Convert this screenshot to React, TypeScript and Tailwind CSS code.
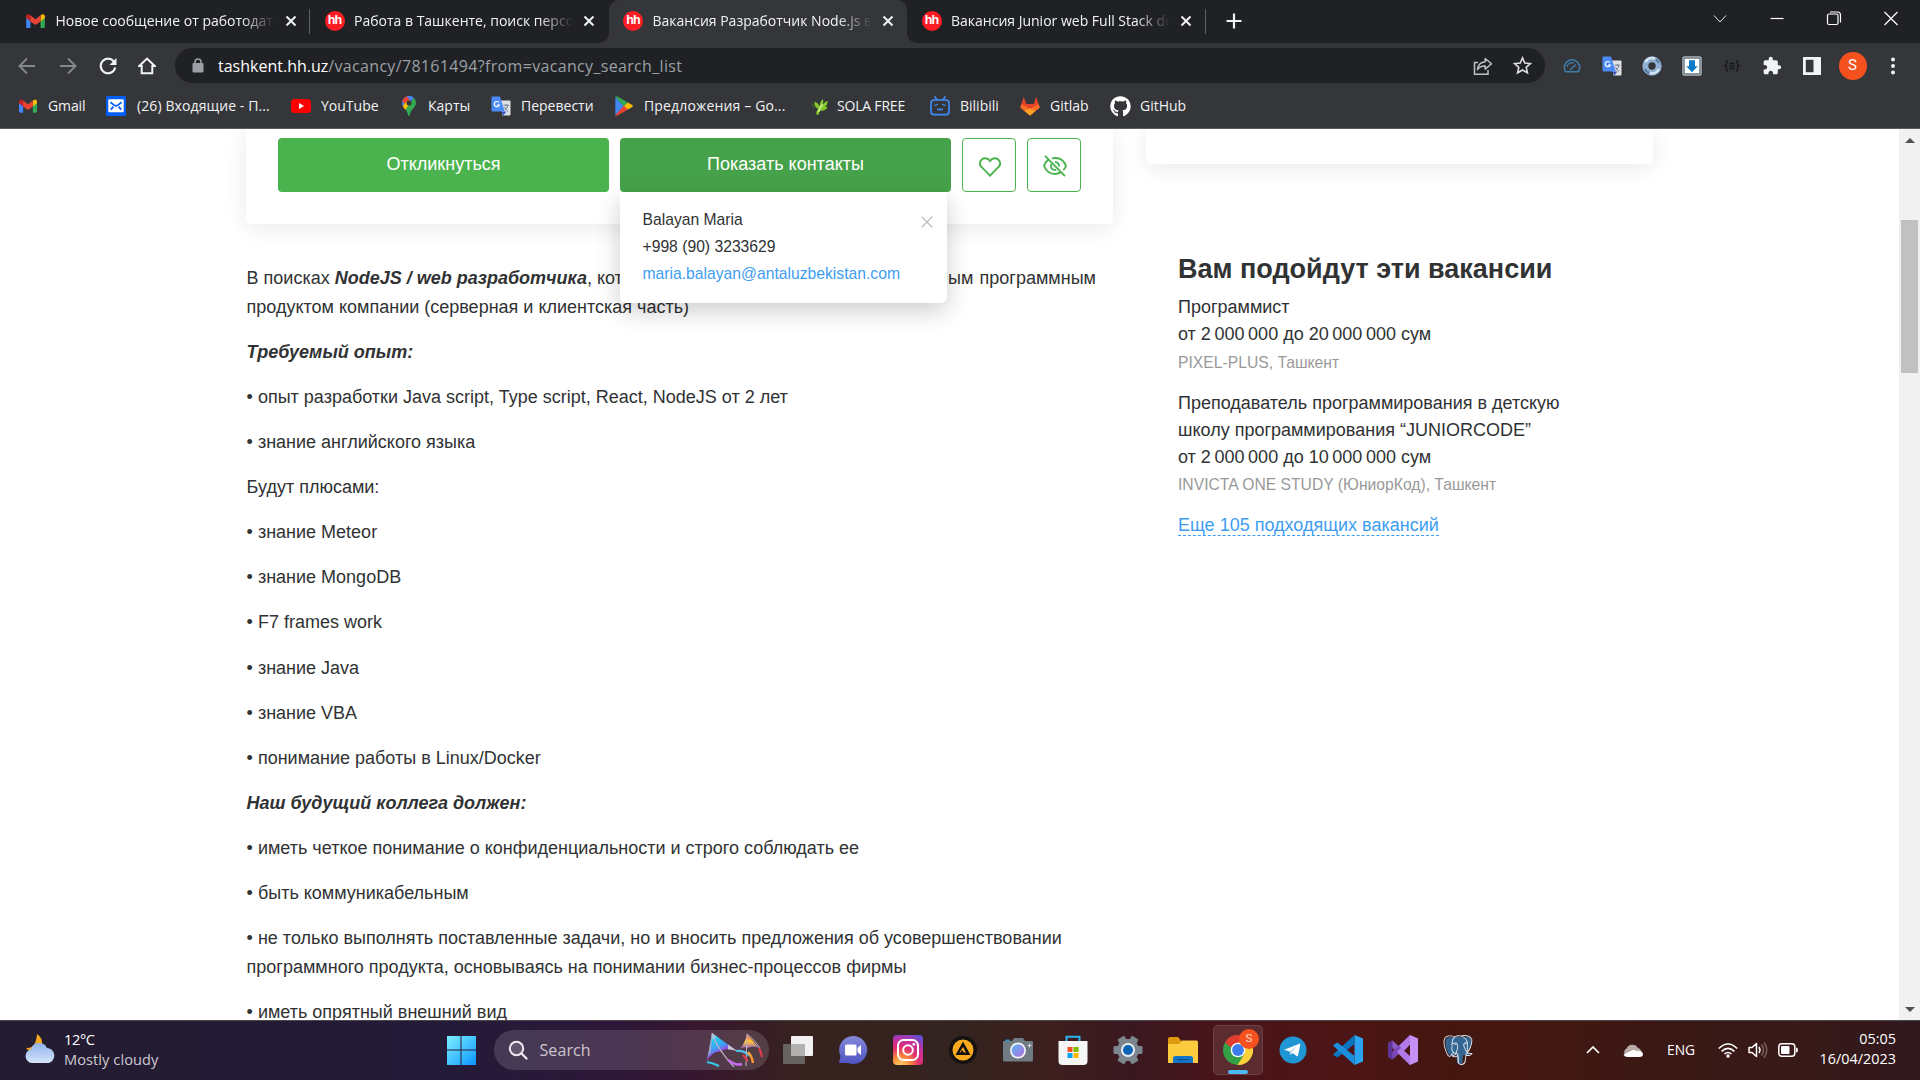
import type { ReactNode } from "react";
import { FaGithub } from "react-icons/fa";
import { SiPostgresql } from "react-icons/si";
import { MdExtension } from "react-icons/md";

/* ---------- small icons ---------- */

const Gmail = ({ className = "" }: { className?: string }) => (
  <svg viewBox="0 0 24 18" className={className}>
    <path d="M0 3v13.400Q0 18 1.600 18H5.500V7z" fill="#4285f4" />
    <path d="M24 3v13.400Q24 18 22.400 18H18.500V7z" fill="#34a853" />
    <path d="M18.500 2v7.500L24 5.300V3c0-2.600-2.700-3.600-4.500-2.100z" fill="#fbbc04" />
    <path d="M5.500 2v7.500L0 5.300V3C0 .4 2.700-.6 4.500.9z" fill="#c5221f" />
    <path d="M5.500 9.500V1.700L12 6.600l6.500-4.900v7.800L12 14.300z" fill="#ea4335" />
  </svg>
);

const Hh = () => (
  <span className="flex h-5 w-5 shrink-0 items-center justify-center rounded-full bg-[#ff1c24] pb-px font-['Liberation_Sans'] text-[12.500px] leading-none font-bold tracking-[-0.800px] text-white">
    hh
  </span>
);

const Translate = () => (
  <svg viewBox="0 0 20 20" className="h-5 w-5">
    <path d="M9 4.500h9.500q1 0 1 1v13q0 1-1 1h-7z" fill="#dfe1e5" />
    <path d="M10.500 15.500l1.800 4 3.200-4z" fill="#3a4fc0" />
    <path d="M1.500.5H9l4.800 15H1.500q-1 0-1-1v-13q0-1 1-1z" fill="#4c8bf5" />
    <path d="M8 6.600A2.600 2.600 0 1 0 8.300 9H6" fill="none" stroke="#fff" strokeWidth="1.200" />
    <path d="M12.700 9.200h5.200M15.200 8v1.200m1.700 0c-.5 2.400-2 4-3 4.900m-.4-3c.7 1.600 2 3 3.700 4.300" fill="none" stroke="#5f6f86" strokeWidth=".9" />
  </svg>
);

const MailRu = () => (
  <svg viewBox="0 0 20 20" className="h-5 w-5">
    <rect width="20" height="20" rx="1.500" fill="#005ff9" />
    <rect x="2.300" y="3.300" width="15.400" height="13" rx="1" fill="#fff" />
    <path d="M4.500 6.200l3.200 2.700q2.300 1.700 4.600 0l3.200-2.700M4.800 13.700l2.600-3M15.200 13.700l-2.600-3" fill="none" stroke="#005ff9" strokeWidth="1.800" />
  </svg>
);

const Youtube = () => (
  <svg viewBox="0 0 20 14" className="h-[14px] w-5">
    <rect width="20" height="14" rx="3.500" fill="#f00" />
    <path d="M8 4l5.200 3L8 10z" fill="#fff" />
  </svg>
);

const MapPin = () => (
  <svg viewBox="0 0 14 20" className="h-5 w-[14px]">
    <path d="M7 0a7 7 0 0 1 4.600 1.700L2.200 12C1 10.300 0 9 0 7a7 7 0 0 1 7-7z" fill="#4285f4" />
    <path d="M1.600 2.500A7 7 0 0 1 5 .3l3.500 3.100L4 8.700.2 5.500z" fill="#ea4335" />
    <path d="M5 .3A7 7 0 0 1 11.700 1.800L8.700 5.300z" fill="#4285f4" />
    <path d="M9.500 8.200L3.500 14Q1 11 .8 9.800l4-4.200z" fill="#fbbc04" />
    <path d="M11.700 1.800A7 7 0 0 1 14 7c0 4.500-5.500 6-6.200 12.300q-.8 1.400-1.600 0Q5.700 16.400 3.500 13.600z" fill="#34a853" />
    <circle cx="7" cy="7" r="2.500" fill="#35363a" />
  </svg>
);

const Play = () => (
  <svg viewBox="0 0 18 20" className="h-5 w-[18px]">
    <path d="M.3.7v18.600L9 10z" fill="#4285f4" />
    <path d="M.3.7Q1-.2 2.500.5L13 6.600 9 10.500z" fill="#34a853" />
    <path d="M.3 19.300q.7.900 2.200.2L13 13.400 9 9.500z" fill="#ea4335" />
    <path d="M13 6.500l4.200 2.500q1.400 1 0 2L13 13.500 9 10z" fill="#fbbc04" />
  </svg>
);

const Sola = () => (
  <svg viewBox="0 0 20 20" className="h-5 w-5">
    <path d="M2 6.500q3.500 1.500 4.500 6-4-1-4.500-6z" fill="#3d5a2c" />
    <path d="M7.500 18.500Q6.800 15.500 9 13 5 10.500 5.500 5.500q4 1.500 5 5Q10.800 5.500 14 3q1 3.500-.5 6.500Q15.500 5.500 18.500 5q.3 4-2.800 6 1.800-.4 2.800.3-2 4-7 3.400-1.700 1-1.500 3.500-1.200 1-2.500.3z" fill="#84c92c" />
    <path d="M9.500 16q1-5 4.500-7.500" stroke="#dff59c" fill="none" strokeWidth="1.200" />
  </svg>
);

const Bili = () => (
  <svg viewBox="0 0 20 20" className="h-5 w-5" fill="none" stroke="#3f8cf6" strokeWidth="1.700" strokeLinecap="round">
    <rect x="1" y="4" width="18" height="14.600" rx="3.200" />
    <path d="M5 1l2 2.800M15 1l-2 2.800" />
    <path d="M4.800 9.300l2.600-.8M15.200 9.300l-2.600-.8M7.500 13q1.200 1.500 2.500 0 1.300 1.500 2.500 0" strokeWidth="1.300" />
  </svg>
);

const Gitlab = () => (
  <svg viewBox="0 0 20 20" className="h-5 w-5">
    <path d="M.3 11.500L3.700.8 6.300 8h7.400L16.300.8l3.400 10.700L10 19.500z" fill="#e24329" />
    <path d="M10 19.500L.3 11.500 1.500 8 10 13l8.500-5 1.200 3.500z" fill="#fc6d26" />
    <path d="M4.500 15L10 12.500l5.500 2.500-5.500 4.500z" fill="#fca326" />
  </svg>
);

/* ---------- tab strip ---------- */

const TabClose = () => (
  <svg viewBox="0 0 12 12" className="ml-[10px] h-3 w-3 shrink-0">
    <path d="M1.500 1.500l9 9M10.500 1.500l-9 9" stroke="#f1f3f4" strokeWidth="2" />
  </svg>
);

function Tab({ icon, title, active, line }: { icon: ReactNode; title: string; active?: boolean; line?: boolean }) {
  return (
    <div
      className={
        active
          ? "relative flex h-full w-[298.500px] items-center rounded-t-[10px] bg-[#35363a] pb-px"
          : "relative flex h-full w-[298.500px] items-center pb-px"
      }
    >
      {active && (
        <>
          <svg viewBox="0 0 10 10" className="absolute bottom-0 -left-[10px] h-[10px] w-[10px]">
            <path d="M10 0v10H0A10 10 0 0 0 10 0z" fill="#35363a" />
          </svg>
          <svg viewBox="0 0 10 10" className="absolute -right-[10px] bottom-0 h-[10px] w-[10px]">
            <path d="M0 0v10h10A10 10 0 0 1 0 0z" fill="#35363a" />
          </svg>
        </>
      )}
      <span className="ml-[14.500px] flex w-[29.500px] shrink-0">{icon}</span>
      <span className="w-[219px] shrink-0 overflow-hidden pb-[2px] text-[14px] whitespace-nowrap text-[#f1f3f4] [mask-image:linear-gradient(to_right,#000_185px,transparent_219px)]">
        {title}
      </span>
      <TabClose />
      {line && <span className="absolute right-0 h-[25px] w-px bg-[#5f6368]" />}
    </div>
  );
}

function TabStrip() {
  return (
    <div className="flex h-[43px] items-center bg-[#202124] pl-[11.500px]">
      <Tab icon={<Gmail className="h-[14px] w-[19px]" />} title="Новое сообщение от работодателя" line />
      <Tab icon={<Hh />} title="Работа в Ташкенте, поиск персонала" />
      <Tab icon={<Hh />} title="Вакансия Разработчик Node.js в Ташкенте" active />
      <Tab icon={<Hh />} title="Вакансия Junior web Full Stack developer" line />
      <svg viewBox="0 0 16 16" className="mb-px ml-[20px] h-4 w-4">
        <path d="M8 0.500v15M.5 8h15" stroke="#f1f3f4" strokeWidth="2.200" />
      </svg>
      <div className="ml-auto flex h-full items-start pt-[10px]">
        <svg viewBox="0 0 16 16" className="mr-[41px] h-4 w-4">
          <path d="M2 5.500l6 6.500 6-6.500" stroke="#e8eaed" fill="none" />
        </svg>
        <svg viewBox="0 0 16 16" className="mr-[41px] h-4 w-4">
          <path d="M1.500 8.500h13" stroke="#fff" strokeWidth="1.200" />
        </svg>
        <svg viewBox="0 0 16 16" className="mr-[41px] h-4 w-4" fill="none" stroke="#fff" strokeWidth="1.200">
          <rect x="1.500" y="4" width="10.500" height="10.500" rx="1.500" />
          <path d="M4 2h7.500Q14.500 2 14.500 5v7.500" />
        </svg>
        <svg viewBox="0 0 16 16" className="mr-[21px] h-4 w-4">
          <path d="M1.500 2l13 13M14.500 2l-13 13" stroke="#fff" strokeWidth="1.200" />
        </svg>
      </div>
    </div>
  );
}

/* ---------- address bar ---------- */

const Slot = ({ children, w }: { children: ReactNode; w: string }) => (
  <span className={`flex shrink-0 items-center justify-center ${w}`}>{children}</span>
);

function AddressBar() {
  return (
    <div className="flex h-[45px] items-center bg-[#35363a] pl-[7px]">
      <Slot w="w-10">
        <svg viewBox="0 0 18 18" className="h-[18px] w-[18px]" fill="none" stroke="#85878b" strokeWidth="1.900">
          <path d="M17 9H2M9 1.500L1.500 9 9 16.500" />
        </svg>
      </Slot>
      <Slot w="w-[42px]">
        <svg viewBox="0 0 18 18" className="h-[18px] w-[18px]" fill="none" stroke="#85878b" strokeWidth="1.900">
          <path d="M1 9h15M9 1.500L16.500 9 9 16.500" />
        </svg>
      </Slot>
      <Slot w="w-[38px]">
        <svg viewBox="0 0 18 18" className="h-[18px] w-[18px]" fill="none" stroke="#f1f3f4" strokeWidth="2.100">
          <path d="M15.200 5A7.300 7.300 0 1 0 16.200 10.500" />
          <path d="M17.500 1v7h-7z" fill="#f1f3f4" stroke="none" />
        </svg>
      </Slot>
      <Slot w="w-10">
        <svg viewBox="0 0 18 18" className="h-[18px] w-[18px]" fill="none" stroke="#f1f3f4" strokeWidth="2">
          <path d="M1.300 9L9 1.600 16.700 9H14.300v7.300H3.700V9z" />
        </svg>
      </Slot>
      <div className="ml-[8px] flex h-[35px] w-[1370px] items-center rounded-full bg-[#202124] pl-[17px]">
        <svg viewBox="0 0 12 15" className="h-[15px] w-3">
          <rect x=".5" y="5" width="11" height="9.500" rx="1.200" fill="#9aa0a6" />
          <path d="M3 6V4a3 3 0 0 1 6 0v2" fill="none" stroke="#9aa0a6" strokeWidth="1.500" />
        </svg>
        <span className="ml-[14px] text-[16px] whitespace-nowrap text-[#9aa0a6]">
          <span className="text-white">tashkent.hh.uz</span>
          <span className="tracking-[0.330px]">/vacancy/78161494?from=vacancy_search_list</span>
        </span>
        <div className="ml-auto flex pr-[3px]">
          <Slot w="w-10">
            <svg viewBox="0 0 20 20" className="ml-px h-5 w-5" fill="none" stroke="#bdc1c6" strokeWidth="1.500">
              <path d="M5 6.500H1.500v11.700h13.500V14" />
              <path d="M12.200 2.500l6.300 5.300-6.300 5.300v-3.200q-5-.3-7.700 3.600.7-7 7.700-7.700z" strokeLinejoin="round" />
            </svg>
          </Slot>
          <Slot w="w-10">
            <svg viewBox="0 0 20 20" className="h-[19px] w-[19px]" fill="none" stroke="#dadce0" strokeWidth="1.700">
              <path d="M10 2l2.400 5.400 5.900.6-4.400 3.900 1.300 5.800L10 14.700l-5.200 3 1.300-5.800L1.700 8l5.900-.6z" />
            </svg>
          </Slot>
        </div>
      </div>
      <div className="ml-[7px] flex items-center">
        <Slot w="w-10">
          <svg viewBox="0 0 18 14" className="h-[14px] w-[18px]" fill="none" stroke="#3f7fae" strokeWidth="1.500">
            <path d="M2.500 12.700A7.700 7.700 0 1 1 15.500 12.700z" strokeLinejoin="round" />
            <path d="M7 11l6-5.500M4 8a5 5 0 0 1 7-4" strokeWidth="1.300" />
          </svg>
        </Slot>
        <Slot w="w-10"><Translate /></Slot>
        <Slot w="w-10">
          <svg viewBox="0 0 20 20" className="h-5 w-5" fill="none">
            <circle cx="10" cy="10" r="6.700" stroke="#8fb0d2" strokeWidth="6" />
            <path d="M3.500 6A7.800 7.800 0 0 1 13 2.500M16.800 13A7.500 7.500 0 0 1 8 17" stroke="#d5e3f0" strokeWidth="2.600" />
            <path d="M3 13a7.500 7.500 0 0 0 4 4M17 7a7.500 7.500 0 0 0-3-3.500" stroke="#5277a0" strokeWidth="2" />
          </svg>
        </Slot>
        <Slot w="w-10">
          <svg viewBox="0 0 20 20" className="h-5 w-5">
            <rect x=".5" y=".5" width="19" height="19" rx="1.500" fill="#eef2f4" />
            <rect x="2" y="2" width="16" height="16" fill="#fff" stroke="#3e5866" strokeWidth="1.200" />
            <path d="M7 4.300h6v6h2.700L10 16.300l-5.700-6H7z" fill="#0a7bc8" />
          </svg>
        </Slot>
        <Slot w="w-10">
          <svg viewBox="0 0 16 12" className="h-3 w-4" fill="none" stroke="#17181a" strokeWidth="1.400">
            <path d="M4 1Q2.300 1 2.500 3T1 6q1.700.5 1.500 2.800T4 11M12 1q1.700 0 1.500 2T15 6q-1.700.5-1.500 2.800T12 11M5.500 3.500h5M5.500 6h5M5.500 8.500h5" />
          </svg>
        </Slot>
        <Slot w="w-10"><MdExtension className="h-5 w-5 text-[#f1f3f4]" /></Slot>
        <Slot w="w-10">
          <svg viewBox="0 0 18 18" className="h-[18px] w-[18px]">
            <rect width="18" height="18" rx=".5" fill="#f1f3f4" />
            <rect x="2.800" y="2.800" width="7.700" height="12.400" fill="#35363a" />
          </svg>
        </Slot>
        <Slot w="w-[41px]">
          <span className="flex h-7 w-7 items-center justify-center rounded-full bg-[#f4511e] font-['Roboto'] text-[15px] text-white">S</span>
        </Slot>
        <Slot w="w-[39px]">
          <svg viewBox="0 0 4 18" className="h-[18px] w-1" fill="#f1f3f4">
            <circle cx="2" cy="2.500" r="2" />
            <circle cx="2" cy="9" r="2" />
            <circle cx="2" cy="15.500" r="2" />
          </svg>
        </Slot>
      </div>
    </div>
  );
}

/* ---------- bookmarks ---------- */

function Bookmark({ icon, label, w, gap = "ml-[11px]" }: { icon: ReactNode; label: string; w: string; gap?: string }) {
  return (
    <div className={`flex shrink-0 items-center text-[14px] whitespace-nowrap text-[#f1f3f4] ${w}`}>
      {icon}
      <span className={`pb-[2px] ${gap}`}>{label}</span>
    </div>
  );
}

function Bookmarks() {
  return (
    <div className="flex h-[41px] items-center border-b border-[#5b5c60] bg-[#35363a] pb-[4px] pl-[19px]">
      <Bookmark w="w-[87px] tracking-[-0.100px]" icon={<Gmail className="h-[14px] w-[18px]" />} label="Gmail" />
      <Bookmark w="w-[185px] tracking-[0.100px]" icon={<MailRu />} label="(26) Входящие - П..." />
      <Bookmark w="w-[111px]" gap="ml-[10px]" icon={<Youtube />} label="YouTube" />
      <Bookmark w="w-[89px]" gap="ml-[12px]" icon={<MapPin />} label="Карты" />
      <Bookmark w="w-[124px]" gap="ml-[10px]" icon={<Translate />} label="Перевести" />
      <Bookmark w="w-[194px] tracking-[0.150px]" icon={<Play />} label="Предложения – Go..." />
      <Bookmark w="w-[121px] tracking-[-0.200px]" gap="ml-[8px]" icon={<Sola />} label="SOLA FREE" />
      <Bookmark w="w-[90px]" gap="ml-[10px]" icon={<Bili />} label="Bilibili" />
      <Bookmark w="w-[90px]" gap="ml-[10px]" icon={<Gitlab />} label="Gitlab" />
      <Bookmark w="w-[100px]" gap="ml-[9px]" icon={<FaGithub className="h-[21px] w-[21px] text-white" />} label="GitHub" />
    </div>
  );
}

/* ---------- page ---------- */

const lines: { text: string; head?: boolean }[] = [
  { text: "Требуемый опыт:", head: true },
  { text: "• опыт разработки Java script, Type script, React, NodeJS от 2 лет" },
  { text: "• знание английского языка" },
  { text: "Будут плюсами:" },
  { text: "• знание Meteor" },
  { text: "• знание MongoDB" },
  { text: "• F7 frames work" },
  { text: "• знание Java" },
  { text: "• знание VBA" },
  { text: "• понимание работы в Linux/Docker" },
  { text: "Наш будущий коллега должен:", head: true },
  { text: "• иметь четкое понимание о конфиденциальности и строго соблюдать ее" },
  { text: "• быть коммуникабельным" },
  {
    text: "• не только выполнять поставленные задачи, но и вносить предложения об усовершенствовании программного продукта, основываясь на понимании бизнес-процессов фирмы",
  },
  { text: "• иметь опрятный внешний вид" },
];

function ContactsPopup() {
  return (
    <div className="absolute top-[54px] left-0 z-10 h-[111px] w-[327px] rounded-b-[6px] bg-white pt-[14px] pl-[22.500px] text-left text-[15.700px] leading-[27px] text-[#303233] shadow-[0_8px_24px_rgba(0,0,0,0.2)]">
      <p>Balayan Maria</p>
      <p>+998 (90) 3233629</p>
      <p className="text-[#3d9df2]">maria.balayan@antaluzbekistan.com</p>
      <svg viewBox="0 0 12 12" className="absolute top-[24px] right-[14px] h-3 w-3">
        <path d="M.8.8l10.400 10.400M11.200.8L.8 11.200" stroke="#bfbfbf" strokeWidth="1.300" />
      </svg>
    </div>
  );
}

function ActionCard() {
  return (
    <div className="flex h-[95px] w-[867px] gap-[11px] rounded-b-[5px] bg-white pt-[9px] pl-[32px] text-[18px] text-white shadow-[0_4px_22px_rgba(0,0,0,0.09)]">
      <div className="flex h-[54px] w-[331px] items-center justify-center rounded-[4px] bg-[#4bb34e] pb-[2px]">Откликнуться</div>
      <div className="relative flex h-[54px] w-[331px] items-center justify-center rounded-[4px] bg-[#46a24a] pb-[2px]">
        Показать контакты
        <ContactsPopup />
      </div>
      <div className="flex h-[54px] w-[54px] items-center justify-center rounded-[4px] border border-[#4bb34e]">
        <svg viewBox="0 0 22 20" className="mt-[3px] ml-px h-5 w-[22px]" fill="none" stroke="#4bb34e" strokeWidth="1.900">
          <path d="M11 18.700L2.700 10.200A5.300 5.300 0 0 1 2 3.300C4.500.2 9 .8 11 4c2-3.200 6.500-3.800 9-.7a5.300 5.300 0 0 1-.7 6.900z" />
        </svg>
      </div>
      <div className="flex h-[54px] w-[54px] items-center justify-center rounded-[4px] border border-[#4bb34e]">
        <svg viewBox="0 0 24 22" className="mt-px ml-px h-[22px] w-6" fill="none" stroke="#4bb34e" strokeWidth="1.900">
          <path d="M5.500 4.500Q2.500 6.700 1 11q3.300 8 11 8 3.200 0 5.600-1.600M9 3.400Q19.500 1.400 23 11q-.9 2.300-2.700 4.200" />
          <path d="M8.500 9Q7.200 11 8.500 13.200t4.700 1.500M12 7a4 4 0 0 1 4 4.500" />
          <path d="M2 .8L22 21.200" />
        </svg>
      </div>
    </div>
  );
}

function Description() {
  return (
    <div className="mt-[40px] ml-[0.600px] flex w-[867px] flex-col gap-[16.300px] text-[18px] leading-[28.800px] text-[#303233]">
      <p>
        В поисках <b className="italic">NodeJS / web разработчика</b>, который{" "}
        <span className="[word-spacing:1.300px]">будет заниматься нашим основным </span>программным продуктом компании
        (серверная и клиентская часть)
      </p>
      {lines.map((l) => (
        <p key={l.text} className={l.head ? "font-bold italic" : ""}>
          {l.text}
        </p>
      ))}
    </div>
  );
}

function Sidebar() {
  return (
    <div className="ml-[33px] w-[507px] text-[18px] leading-[27px] text-[#303233]">
      <div className="h-[35px] rounded-b-[5px] bg-white shadow-[0_4px_22px_rgba(0,0,0,0.09)]" />
      <div className="pt-[85px] pl-[32px]">
        <h2 className="text-[27px] leading-[40px] font-bold whitespace-nowrap">Вам подойдут эти вакансии</h2>
        <p className="mt-[5px]">Программист</p>
        <p>от 2&#8239;000&#8239;000 до 20&#8239;000&#8239;000 сум</p>
        <p className="mt-px text-[15.700px] text-[#999]">PIXEL-PLUS, Ташкент</p>
        <p className="mt-[14px] w-[400px]">Преподаватель программирования в детскую школу программирования “JUNIORCODE”</p>
        <p>от 2&#8239;000&#8239;000 до 10&#8239;000&#8239;000 сум</p>
        <p className="text-[15.700px] text-[#999]">INVICTA ONE STUDY (ЮниорКод), Ташкент</p>
        <p className="mt-[17px] inline-block border-b border-dashed border-[#3d9df2] leading-[20px] text-[#3d9df2]">Еще 105 подходящих вакансий</p>
      </div>
    </div>
  );
}

function Scrollbar() {
  return (
    <div className="ml-auto flex w-[21px] flex-col items-center bg-[#f1f1f1]">
      <svg viewBox="0 0 10 5" className="mt-[9px] h-[5px] w-[10px]">
        <path d="M0 5l5-5 5 5z" fill="#505050" />
      </svg>
      <div className="mt-[77px] h-[153px] w-[17px] bg-[#c1c1c1]" />
      <svg viewBox="0 0 10 5" className="mt-auto mb-[8px] h-[5px] w-[10px]">
        <path d="M0 0l5 5 5-5z" fill="#505050" />
      </svg>
    </div>
  );
}

/* ---------- taskbar ---------- */

const App30 = ({ children, vb = "0 0 30 30" }: { children: ReactNode; vb?: string }) => (
  <div className="flex w-[55px] shrink-0 justify-center">
    <svg viewBox={vb} className="h-[30px] w-[30px]">{children}</svg>
  </div>
);

function Kites() {
  return (
    <svg viewBox="0 0 58 34" className="h-[34px] w-[58px]">
      <defs>
        <linearGradient id="kiteA" x1=".2" y1="0" x2=".6" y2=".75">
          <stop offset="0" stopColor="#d7e4f2" />
          <stop offset=".3" stopColor="#28c5f0" />
          <stop offset=".62" stopColor="#3f9df0" />
          <stop offset=".85" stopColor="#a33fe0" />
          <stop offset="1" stopColor="#b9b4c6" />
        </linearGradient>
        <linearGradient id="kiteB" x1="0" y1="0" x2="0" y2="1">
          <stop offset="0" stopColor="#e9506c" />
          <stop offset=".5" stopColor="#ffc531" />
          <stop offset="1" stopColor="#8f5ad6" />
        </linearGradient>
      </defs>
      <path d="M6 0L31 18Q21 14 15 18.500 6 18 1 28z" fill="url(#kiteA)" />
      <path d="M6 0L1 28q1-6 4-9z" fill="#a7a0c8" />
      <path d="M22 11.500l9 6.500q-5-2-9-1.500z" fill="#c9c6d4" />
      <path d="M6 0q4 14 22 34" stroke="#b9b4c6" strokeWidth="1.200" fill="none" />
      <path d="M1 29q6 1 12 4" stroke="#35c6ea" strokeWidth="2.200" fill="none" />
      <path d="M22 27q8 6 14 4" stroke="#c86bf0" strokeWidth="2.400" fill="none" />
      <path d="M30 18q8-1 14 5" stroke="#4fc0ee" strokeWidth="2.200" fill="none" />
      <path d="M41 1l12 14q-6-3-11 0-4-2-8 1 5-6 7-15z" fill="url(#kiteB)" />
      <path d="M41 1l-1 32M41 1q8 6 13 14" stroke="#b9b4c6" strokeWidth="1" fill="none" />
      <path d="M42 19q4 4 5 11" stroke="#ff9a2b" strokeWidth="2.400" fill="none" />
      <path d="M53 15q2 4 3 9" stroke="#e23b4a" strokeWidth="2.200" fill="none" />
      <path d="M37 22l5 6" stroke="#e23b4a" strokeWidth="2" fill="none" />
    </svg>
  );
}

function TaskApps() {
  return (
    <div className="flex items-center">
      <App30>
        <rect x="8" y="1" width="22" height="20" rx="1" fill="#f1f1f1" />
        <rect x="0" y="9" width="22" height="20" rx="1" fill="#666260" />
        <path d="M8 9h14v12H8z" fill="#b3b1b0" />
      </App30>
      <App30>
        <defs>
          <linearGradient id="chat" x1="0" y1="0" x2="0" y2="1">
            <stop offset="0" stopColor="#8388d8" />
            <stop offset="1" stopColor="#5054c4" />
          </linearGradient>
        </defs>
        <path d="M15 1a14 14 0 1 1-5 27H1l1.500-7A14 14 0 0 1 15 1z" fill="url(#chat)" />
        <rect x="7" y="9.500" width="11.500" height="11" rx="1.500" fill="#fff" />
        <path d="M19.500 13l3.500-3v10l-3.500-3z" fill="#fff" />
      </App30>
      <App30>
        <defs>
          <radialGradient id="insta" cx=".25" cy="1.050" r="1.200">
            <stop offset="0" stopColor="#ffd86b" />
            <stop offset=".28" stopColor="#fb8a3c" />
            <stop offset=".52" stopColor="#e1306c" />
            <stop offset=".75" stopColor="#c22f9f" />
            <stop offset="1" stopColor="#5b51d8" />
          </radialGradient>
        </defs>
        <rect width="30" height="30" rx="4" fill="url(#insta)" />
        <rect x="5" y="5" width="20" height="20" rx="5.500" fill="none" stroke="#fff" strokeWidth="2" />
        <circle cx="15" cy="15" r="4.800" fill="none" stroke="#fff" strokeWidth="2" />
        <circle cx="20.800" cy="9.300" r="1.400" fill="#fff" />
      </App30>
      <App30>
        <circle cx="15" cy="15" r="14" fill="#141210" />
        <circle cx="15" cy="15" r="10.500" fill="#f9ab1d" />
        <path d="M15 6.500l7.500 13.500H7.500z" fill="#141210" />
        <path d="M15 12l3 5.500h-2L14 15l-1.500 2.500h-1z" fill="#f9ab1d" />
      </App30>
      <App30>
        <defs>
          <linearGradient id="lens" x1="0" y1="0" x2="1" y2="1">
            <stop offset="0" stopColor="#5ab6ee" />
            <stop offset="1" stopColor="#b06ee0" />
          </linearGradient>
        </defs>
        <path d="M2 6q0-1.500 1.500-1.500h2Q7 4.500 7 6z" fill="#2196d8" />
        <path d="M0 7q0-1 1-1h8l2-3h9l2 3h7q1 0 1 1v18q0 1.500-1.500 1.500h-27Q0 26.500 0 25z" fill="#707b83" />
        <circle cx="15" cy="15.500" r="8" fill="#f2f4f6" />
        <circle cx="15" cy="15.500" r="6.300" fill="url(#lens)" />
        <path d="M26.500 8.500v4M24.500 10.500h4" stroke="#d8dde0" strokeWidth="1" />
      </App30>
      <App30>
        <path d="M8.500 7V1.800h13V7" fill="none" stroke="#2cb4f0" strokeWidth="2" />
        <path d="M.5 6h29v20q0 4-4 4h-21q-4 0-4-4z" fill="#f5f5f5" />
        <path d="M9.500 12h5v5h-5z" fill="#f25022" />
        <path d="M15.500 12h5v5h-5z" fill="#7fba00" />
        <path d="M9.500 18h5v5h-5z" fill="#00a4ef" />
        <path d="M15.500 18h5v5h-5z" fill="#ffb900" />
      </App30>
      <App30>
        <g fill="#7d868e">
          <circle cx="15" cy="15" r="11" />
          {[0, 60, 120].map((a) => (
            <rect key={a} x="11" y="0.500" width="8" height="29" rx="1.500" transform={`rotate(${a + 30} 15 15)`} />
          ))}
        </g>
        <circle cx="15" cy="15" r="7" fill="#e8ecf0" />
        <circle cx="15" cy="15" r="5" fill="#0a63b4" />
      </App30>
      <App30>
        <path d="M0 4q0-2 2-2h8l3 3.500V12H0z" fill="#dd9a0e" />
        <path d="M0 9h11l3-3.500h14.500q1.500 0 1.500 1.500v21H0z" fill="#fccb3e" />
        <path d="M5 28v-4.500q0-2.500 2.500-2.500h15q2.500 0 2.500 2.500V28z" fill="#1275c8" />
        <path d="M9 24.500h12" stroke="#0b4f92" strokeWidth="1.200" />
      </App30>
      <div className="relative mx-[2.500px] flex h-[50px] w-[50px] items-center justify-center rounded-[5px] border border-white/10 bg-white/10">
        <svg viewBox="0 0 30 30" className="h-[30px] w-[30px]">
          <circle cx="15" cy="15" r="15" fill="#34a045" />
          <path d="M15 15L2 7.500A15 15 0 0 1 28 7.500L15 8z" fill="#e33b2e" />
          <path d="M28 7.500A15 15 0 0 1 14.500 30L21.500 18.700 15 7.500z" fill="#fdd03b" />
          <path d="M2 7.500L9 19l6-4z" fill="#34a045" />
          <path d="M2 7.500L8 7l4 1-3 5z" fill="#e33b2e" />
          <circle cx="15" cy="15" r="7.300" fill="#fff" />
          <circle cx="15" cy="15" r="5.900" fill="#3b7ded" />
        </svg>
        <span className="absolute top-[3px] right-[3px] flex h-5 w-5 items-center justify-center rounded-full bg-[#f4511e] font-['Roboto'] text-[11.500px] text-[#ffd9cc]">
          S
        </span>
        <span className="absolute bottom-0 left-[14px] h-1 w-5 rounded-full bg-[#4cb8f5]" />
      </div>
      <App30>
        <circle cx="15" cy="15" r="13.500" fill="#2196d4" />
        <path d="M6 14.700l15.500-6q1-.2.800 1L20 20.500q-.4 1.200-1.500.5l-4-3-2 2-.8-3.500z" fill="#fff" />
        <path d="M11.500 16.500l7.500-5.500-5.500 6.500-.8 2.500z" fill="#b9d5e8" />
      </App30>
      <App30>
        <path d="M21.500 0L30 3.500v23L21.500 30z" fill="#2aa4f0" />
        <path d="M21.500 0v9L4.500 22.500 1 20.500q-1.200-1 0-2z" fill="#0b74be" />
        <path d="M21.500 30v-9L4.500 7.500 1 9.500q-1.200 1 0 2z" fill="#1a8fdc" />
      </App30>
      <App30>
        <path d="M22 0l8 3.500v23L22 30z" fill="#c490f4" />
        <path d="M0 8l4.500-2.500L22 21.500V30L4 12.500V21L0 22z" fill="#8d5cc9" />
        <path d="M0 22l4.500 2.500L22 9V0L4 17V9L0 8z" fill="#7a47b8" />
        <path d="M0 8l4.500-2.500V24.500L0 22z" fill="#5c3596" />
        <path d="M22 0L11 11l5 5 6-6.500zM22 30L9 17l3.500-4L22 21z" fill="#b07be8" />
      </App30>
      <div className="flex w-[55px] justify-center">
        <div className="relative flex h-[30px] w-[30px] items-center justify-center">
          <svg viewBox="0 0 30 30" className="absolute inset-0 h-[30px] w-[30px]">
            <path d="M3 4q3-3 8-1.500 5-1.500 8 0 7-2 9.500 2Q28 13 23 18l5-.5-2 2.500-6 .5-.5 7q-3 3.500-5.500 0l-.5-8Q8 22 5.500 19 2.500 13 2.500 8z" fill="#336791" />
          </svg>
          <SiPostgresql className="relative h-[30px] w-[30px] text-[#dfe7ee]" />
        </div>
      </div>
    </div>
  );
}

function Taskbar() {
  return (
    <div className="flex h-[60px] items-center border-t border-[#4d464c] bg-[linear-gradient(to_right,#241c30_0px,#231b38_440px,#2e1738_620px,#37172f_700px,#37221f_800px,#33231f_960px,#3d1f1e_1050px,#3a1820_1130px,#49141a_1220px,#4d1515_1350px,#431710_1450px,#451711_1520px,#3a1815_1660px,#381a18_1800px,#30181d_1920px)] pb-px">
      <div className="flex w-[446px] items-center pb-[3px] pl-[24px]">
        <svg viewBox="0 0 32 32" className="h-8 w-8">
          <defs>
            <linearGradient id="cloud" x1="0" y1="0" x2="0" y2="1">
              <stop offset="0" stopColor="#8fb2ea" />
              <stop offset="1" stopColor="#d5e4fb" />
            </linearGradient>
          </defs>
          <path d="M13 1q6 4 5 11-2 6-9 6-5 0-7-3 10 1 11-14z" fill="#f5a623" />
          <path d="M8 30a7 7 0 0 1-1-13.800A8.500 8.500 0 0 1 23 15a7.600 7.600 0 0 1 1.500 15z" fill="url(#cloud)" />
          <path d="M3 25q6-6 12-1 7-6 15 0" stroke="#b5ccf5" fill="none" />
        </svg>
        <div className="ml-[8px] text-[14.600px] leading-[20px]">
          <p className="tracking-[-0.400px] text-white">12°C</p>
          <p className="tracking-[0.070px] text-[#cfc9d3]">Mostly cloudy</p>
        </div>
      </div>
      <svg viewBox="0 0 30 30" className="h-[30px] w-[30px]">
        <defs>
          <linearGradient id="win" x1="0" y1="0" x2="1" y2="1">
            <stop offset="0" stopColor="#7ff0ff" />
            <stop offset="1" stopColor="#0a95ff" />
          </linearGradient>
        </defs>
        <path d="M1 1h13.500v13.500H1zM15.500 1H30v13.500H15.500zM1 15.500h13.500V30H1zM15.500 15.500H30V30H15.500z" fill="url(#win)" />
      </svg>
      <div className="ml-[17.500px] flex h-10 w-[275px] items-center rounded-full bg-white/14 pl-[14px]">
        <svg viewBox="0 0 20 20" className="h-5 w-5" fill="none" stroke="#efe9f2">
          <circle cx="8.500" cy="8.500" r="6.700" strokeWidth="2" fill="rgba(255,255,255,0.15)" />
          <path d="M13.500 13.500l5 5" strokeWidth="2.300" strokeLinecap="round" />
        </svg>
        <span className="ml-[12px] text-[16px] tracking-[0.100px] text-[#cdc5d0]">Search</span>
        <span className="mr-[5px] ml-auto"><Kites /></span>
      </div>
      <span className="w-[2px]" />
      <TaskApps />
      <div className="ml-auto flex items-center text-[14px] text-white">
        <svg viewBox="0 0 14 8" className="h-2 w-[14px]">
          <path d="M1 7l6-6 6 6" stroke="#fff" strokeWidth="1.700" fill="none" />
        </svg>
        <svg viewBox="0 0 20 13" className="ml-[23px] h-[13px] w-5">
          <path d="M4 12a4 4 0 0 1-.5-7.500A6.500 6.500 0 0 1 15 4a4.500 4.500 0 0 1 3 6z" fill="#b8aaa8" />
          <path d="M4.500 13q-3 0-4-2.500L11 5.500l2 1.500q6-1 7 3 0 3-3.500 3z" fill="#fff" />
        </svg>
        <span className="ml-[24px] w-[28px] pt-px text-[13.800px]">ENG</span>
        <svg viewBox="0 0 20 16" className="ml-[23px] h-4 w-5" fill="none" stroke="#fff" strokeWidth="1.600">
          <path d="M.8 6.500q9.200-9 18.400 0M3.600 9.300q6.400-6 12.800 0M6.500 12q3.500-3 7 0" />
          <circle cx="10" cy="14" r="1.700" fill="#fff" stroke="none" />
        </svg>
        <svg viewBox="0 0 20 18" className="ml-[10px] h-[18px] w-5" fill="none" stroke="#fff" strokeWidth="1.500">
          <path d="M1 6.500h3l4.500-4v13L4 11.500H1z" strokeLinejoin="round" />
          <path d="M11 6q2 3 0 6" />
          <path d="M13.500 3.500q4 5.500 0 11M16 1.500q5.500 7.500 0 15" stroke="#7a6260" />
        </svg>
        <svg viewBox="0 0 20 14" className="ml-[10px] h-[14px] w-5">
          <rect x=".8" y=".8" width="16" height="12.400" rx="3" fill="none" stroke="#fff" strokeWidth="1.500" />
          <rect x="3" y="3" width="8.500" height="8" rx="1" fill="#fff" />
          <path d="M18 4.500q2 0 2 2.500t-2 2.500z" fill="#fff" />
        </svg>
        <div className="mr-[24px] ml-[20px] w-[78px] pb-[2px] text-right text-[14.400px] leading-[20px]">
          <p>05:05</p>
          <p>16/04/2023</p>
        </div>
      </div>
    </div>
  );
}

export default function App() {
  return (
    <div className="flex h-[1080px] w-[1920px] flex-col overflow-hidden bg-white font-['Open_Sans',sans-serif]">
      <TabStrip />
      <AddressBar />
      <Bookmarks />
      <div className="flex h-[891px] overflow-hidden pl-[246px] font-['Liberation_Sans',sans-serif]">
        <div className="w-[867px] shrink-0">
          <ActionCard />
          <Description />
        </div>
        <Sidebar />
        <Scrollbar />
      </div>
      <Taskbar />
    </div>
  );
}
